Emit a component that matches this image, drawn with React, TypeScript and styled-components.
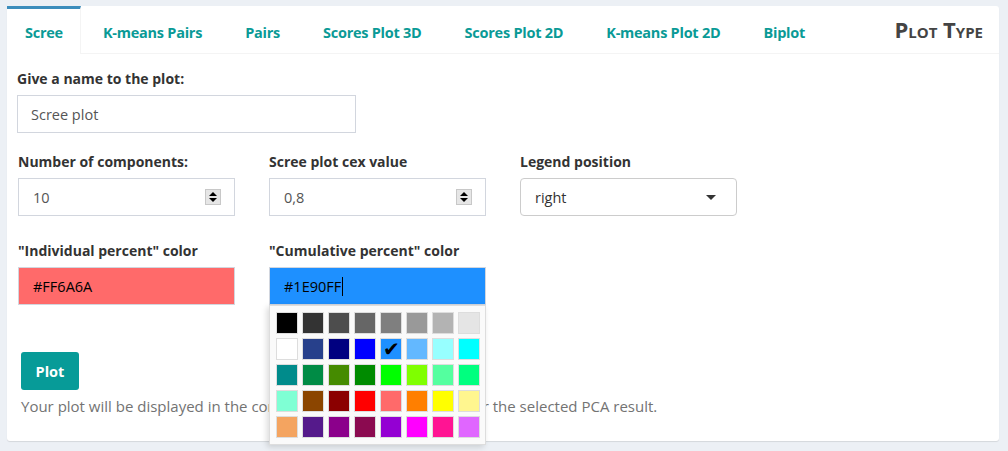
import styled, { createGlobalStyle } from "styled-components";

const GlobalStyle = createGlobalStyle`
  body {
    margin: 0;
    background-color: #ecf0f5;
    font-family: "Open Sans", "Liberation Sans", sans-serif;
    color: #333;
  }
`;

const Page = styled.div`
  padding: 6px 9px 10px 7px;
  height: 451px;
  box-sizing: border-box;
`;

const Card = styled.div`
  background: #fff;
  border-radius: 3px;
  box-shadow: 0 1px 1px rgba(0, 0, 0, 0.1);
  height: 435px;
  position: relative;
`;

const TabBar = styled.div`
  display: flex;
  align-items: stretch;
  height: 48px;
  border-bottom: 1px solid #f4f4f4;
  box-sizing: border-box;
`;

const Tab = styled.div<{ $active?: boolean }>`
  display: flex;
  align-items: center;
  padding: 2px ${(p) => (p.$active ? "17px" : "21px")} 0;
  padding-left: ${(p) => (p.$active ? "18px" : "21px")};
  margin-right: ${(p) => (p.$active ? "1px" : "0")};
  font-size: 14.5px;
  font-weight: 700;
  letter-spacing: -0.25px;
  color: #0a9a96;
  border-top: 3px solid ${(p) => (p.$active ? "#3c8dbc" : "transparent")};
  border-right: 1px solid ${(p) => (p.$active ? "#f4f4f4" : "transparent")};
  background: #fff;
  margin-bottom: ${(p) => (p.$active ? "-1px" : "0")};
  box-sizing: border-box;
`;

const Title = styled.div`
  margin-left: auto;
  margin-right: 16px;
  display: flex;
  align-items: center;
  font-size: 22px;
  font-weight: 700;
  font-variant: small-caps;
  color: #444;
  padding-bottom: 1px;
`;

const Body = styled.div`
  padding: 15px 10px 0 10px;
`;

const Label = styled.div`
  font-size: 14px;
  font-weight: 700;
  color: #333;
  margin-bottom: 7px;
`;

const NameInput = styled.div`
  width: 339px;
  height: 38px;
  border: 1px solid #d2d6de;
  box-sizing: border-box;
  display: flex;
  align-items: center;
  padding-left: 13px;
  font-size: 14.5px;
  color: #555;
`;

const Grid = styled.div`
  display: grid;
  grid-template-columns: 251px 251px 251px;
  row-gap: 25px;
  margin-top: 19px;
  padding-left: 1px;
`;

const Field = styled.div`
  position: relative;
`;

const Box = styled.div<{ $bg?: string; $color?: string; $rounded?: boolean }>`
  width: 217px;
  height: 38px;
  box-sizing: border-box;
  border: 1px solid ${(p) => (p.$rounded ? "#ccc" : "#d2d6de")};
  border-radius: ${(p) => (p.$rounded ? "4px" : "0")};
  background: ${(p) => p.$bg || "#fff"};
  color: ${(p) => p.$color || "#555"};
  display: flex;
  align-items: center;
  padding: 0 14px;
  font-size: 14.5px;
`;

const Spinner = styled.div`
  margin-left: auto;
  margin-right: -1px;
  width: 16px;
  height: 16px;
  background: #e6e6e6;
  border: 1px solid #c8c8c8;
  box-sizing: border-box;
  display: flex;
  flex-direction: column;
  align-items: center;
  justify-content: space-around;
  padding: 1px 0;

  &::before,
  &::after {
    content: "";
    width: 0;
    height: 0;
    border-left: 4px solid transparent;
    border-right: 4px solid transparent;
  }
  &::before {
    border-bottom: 4px solid #000;
  }
  &::after {
    border-top: 4px solid #000;
  }
`;

const Caret = styled.span`
  margin-left: auto;
  margin-right: 6px;
  width: 0;
  height: 0;
  border-left: 5px solid transparent;
  border-right: 5px solid transparent;
  border-top: 5px solid #333;
`;

const Cursor = styled.span`
  display: inline-block;
  width: 1px;
  height: 19px;
  background: #000;
  margin-left: 1px;
`;

const Palette = styled.div`
  position: absolute;
  top: 100%;
  left: 0;
  z-index: 5;
  width: 217px;
  box-sizing: border-box;
  background: #fafafa;
  border: 1px solid #ddd;
  box-shadow: -2px 2px 6px rgba(0, 0, 0, 0.15);
  padding: 6px;
  display: grid;
  grid-template-columns: repeat(8, 22px);
  grid-auto-rows: 22px;
  gap: 4px;
`;

const Swatch = styled.div<{ $c: string }>`
  background: ${(p) => p.$c};
  border: 1px solid #ddd;
  box-sizing: border-box;
  display: flex;
  align-items: center;
  justify-content: center;
  font-size: 20px;
  line-height: 1;
  color: #000;
`;

const Footer = styled.div`
  margin-top: 47px;
  padding-left: 4px;
`;

const PlotButton = styled.button`
  width: 58px;
  height: 38px;
  border: none;
  border-radius: 3px;
  background: #079b98;
  color: #fff;
  font-family: inherit;
  font-size: 14.5px;
  font-weight: 700;
`;

const Help = styled.div`
  margin-top: 6px;
  font-size: 15px;
  color: #737373;
`;

const palette = [
  "#000000", "#333333", "#4D4D4D", "#666666", "#7F7F7F", "#999999", "#B3B3B3", "#E5E5E5",
  "#FFFFFF", "#27408B", "#000080", "#0000FF", "#1E90FF", "#63B8FF", "#97FFFF", "#00FFFF",
  "#008B8B", "#008B45", "#458B00", "#008B00", "#00FF00", "#7FFF00", "#54FF9F", "#00FF7F",
  "#7FFFD4", "#8B4500", "#8B0000", "#FF0000", "#FF6A6A", "#FF7F00", "#FFFF00", "#FFF68F",
  "#F4A460", "#551A8B", "#8B008B", "#8B0A50", "#9400D3", "#FF00FF", "#FF1493", "#E066FF",
];

const tabs = ["Scree", "K-means Pairs", "Pairs", "Scores Plot 3D", "Scores Plot 2D", "K-means Plot 2D", "Biplot"];

export default function App() {
  return (
    <Page>
      <GlobalStyle />
      <Card>
        <TabBar>
          {tabs.map((t, i) => (
            <Tab key={t} $active={i === 0}>
              {t}
            </Tab>
          ))}
          <Title>Plot Type</Title>
        </TabBar>
        <Body>
          <Label>Give a name to the plot:</Label>
          <NameInput>Scree plot</NameInput>
          <Grid>
            <Field>
              <Label>Number of components:</Label>
              <Box>
                10
                <Spinner />
              </Box>
            </Field>
            <Field>
              <Label>Scree plot cex value</Label>
              <Box>
                0,8
                <Spinner />
              </Box>
            </Field>
            <Field>
              <Label>Legend position</Label>
              <Box $rounded $color="#333">
                right
                <Caret />
              </Box>
            </Field>
            <Field>
              <Label>"Individual percent" color</Label>
              <Box $bg="#FF6A6A" $color="#000">
                #FF6A6A
              </Box>
            </Field>
            <Field>
              <Label>"Cumulative percent" color</Label>
              <Box $bg="#1E90FF" $color="#000">
                #1E90FF
                <Cursor />
              </Box>
              <Palette>
                {palette.map((c) => (
                  <Swatch key={c} $c={c}>
                    {c === "#1E90FF" ? "✔" : ""}
                  </Swatch>
                ))}
              </Palette>
            </Field>
          </Grid>
          <Footer>
            <PlotButton>Plot</PlotButton>
            <Help>
              Your plot will be displayed in the corresponding box to the right for the selected PCA result.
            </Help>
          </Footer>
        </Body>
      </Card>
    </Page>
  );
}
